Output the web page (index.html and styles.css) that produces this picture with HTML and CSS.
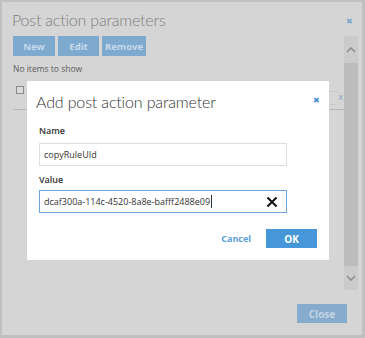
FILE: index.html
```html
<!DOCTYPE html>
<html>
<head>
<meta charset="utf-8">
<link rel="stylesheet" href="styles.css">
</head>
<body>
<div class="frame">
  <div class="header">
    <h1 class="title">Post action parameters</h1>
    <span class="hclose">&#x2716;</span>
  </div>
  <div class="main">
    <div class="list">
      <div class="toolbar">
        <button class="btn">New</button>
        <button class="btn">Edit</button>
        <button class="btn">Remove</button>
      </div>
      <div class="empty">No items to show</div>
      <div class="row">
        <span class="check"></span>
        <span class="spacer"></span>
        <span class="filter"></span>
        <span class="fx">x</span>
      </div>
    </div>
    <div class="scrollbar">
      <div class="arrow up"><svg width="10" height="6" viewBox="0 0 10 6"><path d="M1 5 L5 1 L9 5" fill="none" stroke="#8f8f8f" stroke-width="1.6"/></svg></div>
      <div class="thumb"></div>
      <div class="arrow down"><svg width="10" height="6" viewBox="0 0 10 6"><path d="M1 1 L5 5 L9 1" fill="none" stroke="#8f8f8f" stroke-width="1.6"/></svg></div>
    </div>
  </div>
  <div class="footer">
    <button class="btn closebtn">Close</button>
  </div>

  <div class="modal">
    <div class="mhead">
      <h2 class="mtitle">Add post action parameter</h2>
      <span class="mclose">&#x2716;</span>
    </div>
    <div class="field">
      <label class="lbl">Name</label>
      <div class="input">copyRuleUId</div>
    </div>
    <div class="field">
      <label class="lbl">Value</label>
      <div class="input focus"><span class="val">dcaf300a-114c-4520-8a8e-bafff2488e09</span><span class="caret"></span>
        <svg class="clear" width="12" height="12" viewBox="0 0 12 12"><path d="M1.5 1.5 L10.5 10.5 M10.5 1.5 L1.5 10.5" stroke="#111" stroke-width="2"/></svg>
      </div>
    </div>
    <div class="actions">
      <button class="cancel">Cancel</button>
      <button class="ok">OK</button>
    </div>
  </div>
</div>
</body>
</html>
```

FILE: styles.css
```css
* { box-sizing: border-box; }
html, body { margin: 0; padding: 0; }
body { font-family: "Open Sans", "Liberation Sans", sans-serif; background: #bdbdbd; }

.frame {
  position: relative;
  width: 365px;
  height: 338px;
  border: 2px solid #c0c0c0;
  border-bottom-width: 3px;
  border-right-width: 3px;
  background: #d5d5d5;
  display: flex;
  flex-direction: column;
}

.header {
  display: flex;
  align-items: center;
  justify-content: space-between;
  height: 34px;
  padding: 1px 9px 0 10px;
}
.title {
  margin: 0;
  font-family: "Lato", "Open Sans", sans-serif;
  font-weight: 300;
  font-size: 16px;
  letter-spacing: -0.2px;
  color: #7d7d7d;
}
.hclose { font-size: 8px; color: #7fa9cc; margin-top: 2px; }

.main {
  display: flex;
  flex: 1;
  padding-left: 11px;
}
.list { flex: 1; padding-right: 0; }
.toolbar { display: flex; gap: 3px; }
.btn {
  font-family: "Open Sans", sans-serif;
  font-weight: 700;
  font-size: 9.5px;
  color: #c8dae9;
  background: #7eaad0;
  border: none;
  height: 20px;
  padding: 0;
  margin: 0;
}
.toolbar .btn:nth-child(1) { width: 42px; }
.toolbar .btn:nth-child(2) { width: 41px; }
.toolbar .btn:nth-child(3) { width: 44px; }

.empty {
  font-size: 8.5px;
  color: #5c5c5c;
  margin-top: 7px;
  height: 12px;
  line-height: 12px;
}
.row {
  display: flex;
  align-items: flex-start;
  margin-top: 8px;
  height: 27px;
  border-bottom: 1px solid #b5b5b5;
  margin-right: -2px;
}
.check {
  width: 8px; height: 8px;
  border: 1px solid #8a8a8a;
  margin: 3px 0 0 3px;
  background: #dcdcdc;
}
.spacer { flex: 1; }
.filter {
  width: 12px; height: 14px;
  border: 1px solid #c6c6c6;
  border-right: none;
  margin-top: 8px;
}
.fx { font-size: 9px; color: #7fa2c2; margin: 8px 3px 0 3px; line-height: 12px; }

.scrollbar {
  width: 14px;
  margin-right: 4px;
  height: 254px;
  background: #cbcbcb;
  display: flex;
  flex-direction: column;
}
.arrow { height: 27px; display: flex; align-items: center; justify-content: center; }
.arrow.up { height: 27px; }
.arrow.down { height: 24px; }
.thumb { flex: 1; background: #bcbcbc; }

.footer {
  display: flex;
  justify-content: flex-end;
  padding: 0 15px 12px 0;
}
.closebtn { width: 50px; height: 19px; background: #86abcc; color: #c4d6e5; font-size: 10px; }

.modal {
  position: absolute;
  left: 25px;
  top: 79px;
  width: 302px;
  height: 179px;
  background: #fff;
  padding: 0 9px 0 12px;
}
.mhead { display: flex; align-items: center; justify-content: space-between; height: 40px; padding-top: 0; }
.mtitle {
  margin: 0 0 0 -3px;
  font-family: "Lato", "Open Sans", sans-serif;
  font-weight: 300;
  font-size: 16px;
  letter-spacing: -0.15px;
  color: #333;
}
.mclose { font-size: 8px; color: #4a92d2; margin-top: -4px; }

.field { width: 248px; }
.lbl { display: block; font-size: 9px; font-weight: 600; color: #333; height: 14px; line-height: 14px; margin-top: 3px; }
.input {
  height: 23px;
  border: 1px solid #dedede;
  margin-top: 5px;
  display: flex;
  align-items: center;
  padding: 0 8px 0 4px;
  font-size: 9px;
  color: #333;
}
.field + .field .lbl { margin-top: 7px; }
.field + .field .input { margin-top: 3px; }
.input.focus { border-color: #69a5dc; }
.caret { display: inline-block; width: 1px; height: 13px; background: #333; margin-left: 1px; }
.clear { margin-left: auto; }

.actions {
  display: flex;
  justify-content: flex-end;
  align-items: center;
  gap: 15px;
  margin-top: 16px;
  padding-right: 3px;
}
.cancel { border: none; background: none; padding: 0; font-family: "Open Sans", sans-serif; font-weight: 700; font-size: 9px; color: #5a9fd9; }
.ok { border: none; width: 51px; height: 19px; background: #4597da; color: #fff; font-family: "Open Sans", sans-serif; font-weight: 700; font-size: 10px; padding: 0; }
```
